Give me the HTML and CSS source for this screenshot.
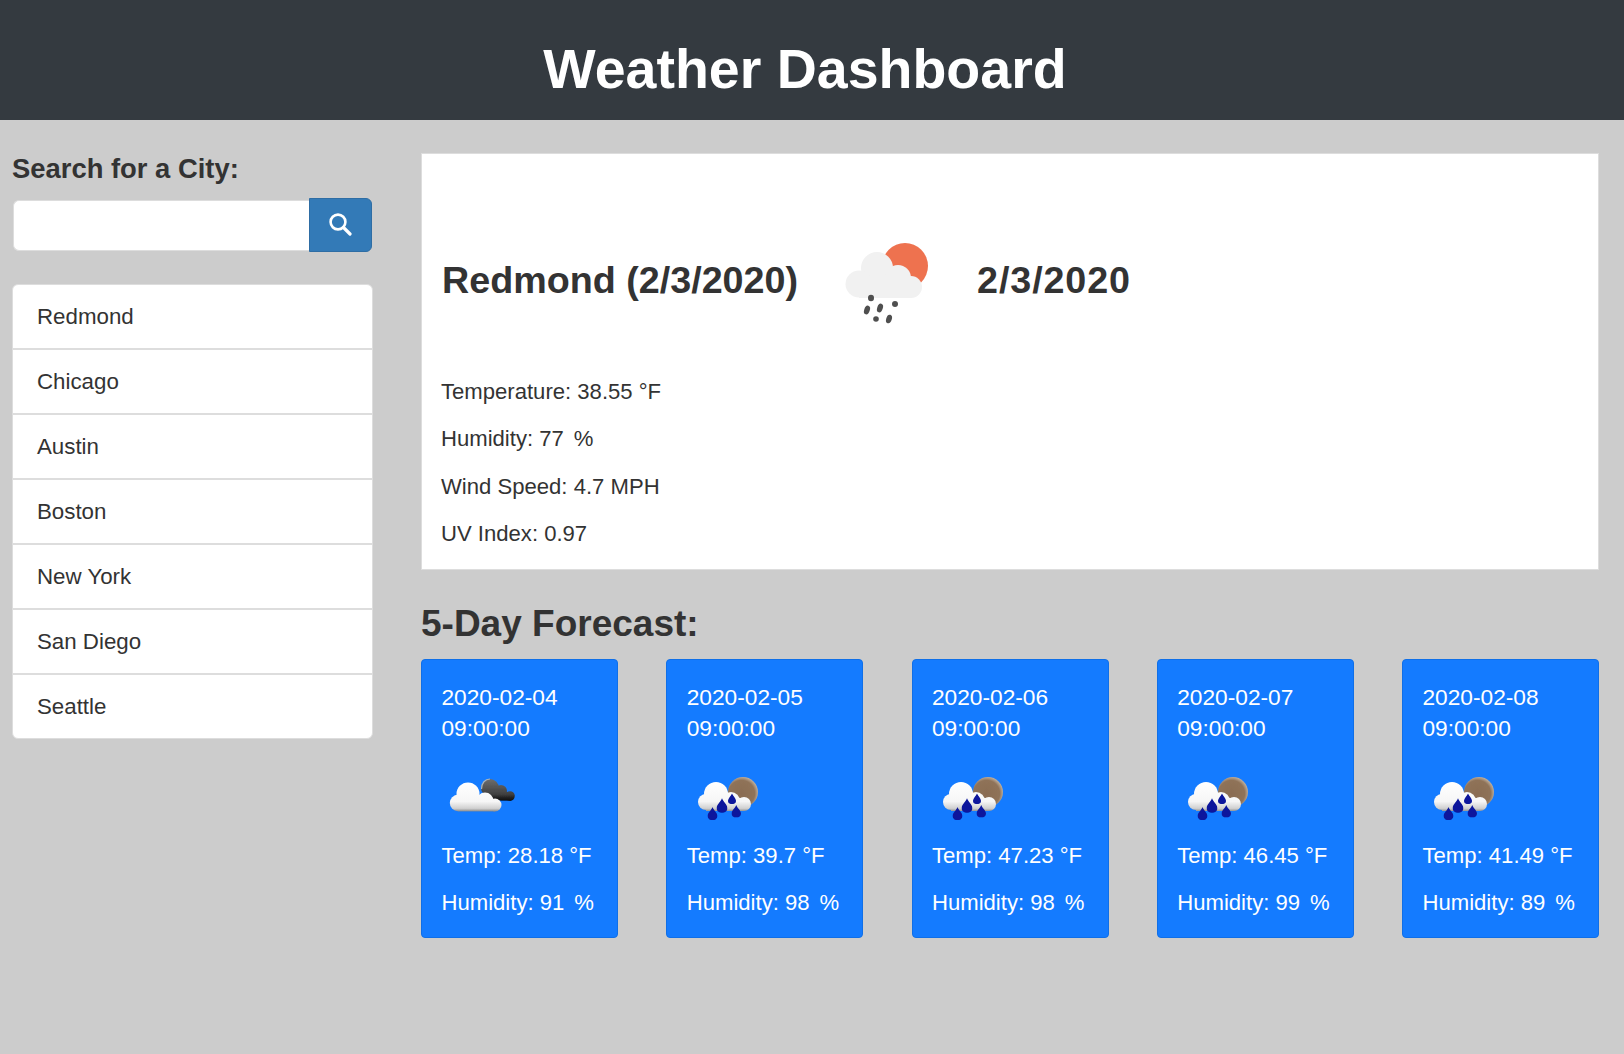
FILE: index.html
```html
<!DOCTYPE html>
<html>
    <head>
        <meta charset="utf-8">
        <title>Weather Dashboard</title>
        <link rel="stylesheet" href="styles.css">
    </head>
    <body>
        <svg class="defs" width="0" height="0">
            <defs>
                <linearGradient id="cloudWhite" gradientUnits="userSpaceOnUse" x1="0" y1="22" x2="0" y2="52">
                    <stop offset="0" stop-color="#ffffff"/>
                    <stop offset="0.65" stop-color="#f6f6f6"/>
                    <stop offset="0.88" stop-color="#d0d0d0"/>
                    <stop offset="1" stop-color="#7d7d7d"/>
                </linearGradient>
                <linearGradient id="cloudDark" gradientUnits="userSpaceOnUse" x1="0" y1="19" x2="0" y2="41">
                    <stop offset="0" stop-color="#6e6e6e"/>
                    <stop offset="0.7" stop-color="#3f3f3f"/>
                    <stop offset="1" stop-color="#050505"/>
                </linearGradient>
                <radialGradient id="sunBrown" cx="0.45" cy="0.55" r="0.55">
                    <stop offset="0" stop-color="#8a6c52"/>
                    <stop offset="0.8" stop-color="#8f7359"/>
                    <stop offset="1" stop-color="#bbaa98"/>
                </radialGradient>
                <filter id="soft"><feGaussianBlur stdDeviation="0.6"/></filter>
                <symbol id="drop" viewBox="0 0 10 13">
                    <path d="M5 0 C6 3 10 6 10 9 A5 4.2 0 0 1 0 9 C0 6 4 3 5 0 Z" fill="#0a169c"/>
                </symbol>
                <symbol id="rainCloud" viewBox="6 0 78 64">
                    <g filter="url(#soft)">
                        <circle cx="62" cy="32" r="15" fill="url(#sunBrown)"/>
                        <g fill="url(#cloudWhite)">
                            <circle cx="35" cy="34" r="12"/>
                            <circle cx="25" cy="42" r="8"/>
                            <circle cx="50" cy="41" r="9"/>
                            <circle cx="63" cy="44" r="7"/>
                            <rect x="25" y="38" width="38" height="13"/>
                        </g>
                        <use href="#drop" x="26.5" y="47" width="10" height="13"/>
                        <use href="#drop" x="35.5" y="37.5" width="11" height="16"/>
                        <use href="#drop" x="47" y="33.5" width="8" height="10.5"/>
                        <use href="#drop" x="50.5" y="45" width="9.5" height="12.5"/>
                    </g>
                </symbol>
                <symbol id="fewClouds" viewBox="7 0 78 64">
                    <g filter="url(#soft)">
                        <g fill="url(#cloudDark)">
                            <circle cx="55" cy="28" r="9"/>
                            <circle cx="66" cy="31" r="6"/>
                            <circle cx="75" cy="36" r="4.8"/>
                            <rect x="52" y="32" width="24" height="8.6"/>
                        </g>
                        <path d="M46.5 29 C46.5 23 50 19 55 19" fill="none" stroke="#a8b4bd" stroke-width="1.2"/>
                        <g fill="url(#cloudWhite)">
                            <circle cx="33" cy="34" r="11.5"/>
                            <circle cx="23" cy="43" r="8.2"/>
                            <circle cx="50" cy="41" r="8.5"/>
                            <circle cx="60" cy="45" r="6.5"/>
                            <rect x="23" y="40" width="37" height="11.4"/>
                        </g>
                    </g>
                </symbol>
            </defs>
        </svg>

        <header class="top-bar">
            <h1>Weather Dashboard</h1>
        </header>

        <div class="page">
            <aside class="sidebar">
                <h3 class="search-title">Search for a City:</h3>
                <div class="search-box">
                    <input type="text" class="search-input">
                    <button class="search-btn">
                        <svg width="24" height="24" viewBox="0 0 24 24">
                            <circle cx="10" cy="10" r="7.4" fill="none" stroke="#fff" stroke-width="2.6"/>
                            <path d="M15.5 15.5 L22 22" stroke="#fff" stroke-width="3.2" stroke-linecap="round"/>
                        </svg>
                    </button>
                </div>
                <ul class="city-list">
                    <li>Redmond</li>
                    <li>Chicago</li>
                    <li>Austin</li>
                    <li>Boston</li>
                    <li>New York</li>
                    <li>San Diego</li>
                    <li>Seattle</li>
                </ul>
            </aside>

            <main class="content">
                <section class="today">
                    <div class="today-head">
                        <h2>Redmond (2/3/2020)</h2>
                        <svg class="today-icon" width="110" height="110" viewBox="0 0 110 110">
                            <g filter="url(#soft)">
                                <circle cx="85" cy="41" r="23" fill="#ee7250"/>
                                <g fill="#f1f1f1">
                                    <circle cx="57" cy="43" r="16"/>
                                    <circle cx="39" cy="59" r="13.5"/>
                                    <circle cx="78" cy="53" r="13"/>
                                    <circle cx="91" cy="62" r="11"/>
                                    <rect x="39" y="55" width="52" height="18"/>
                                </g>
                                <g fill="#4f4f4f">
                                    <ellipse cx="51" cy="73" rx="3" ry="3.2"/>
                                    <ellipse cx="47" cy="85" rx="2.8" ry="4.6" transform="rotate(18 47 85)"/>
                                    <ellipse cx="60" cy="83" rx="2.8" ry="4.6" transform="rotate(18 60 83)"/>
                                    <ellipse cx="75" cy="79" rx="3" ry="3"/>
                                    <ellipse cx="56" cy="94" rx="2.8" ry="2.8"/>
                                    <ellipse cx="69" cy="94" rx="2.8" ry="4.4" transform="rotate(18 69 94)"/>
                                </g>
                            </g>
                        </svg>
                        <h2 class="today-date">2/3/2020</h2>
                    </div>
                    <p>Temperature: 38.55 °F</p>
                    <p>Humidity: 77<span class="pct">%</span></p>
                    <p>Wind Speed: 4.7 MPH</p>
                    <p>UV Index: 0.97</p>
                </section>

                <h3 class="forecast-title">5-Day Forecast:</h3>
                <div class="forecast">
                    <div class="day">
                        <div class="day-date">2020-02-04 09:00:00</div>
                        <svg class="day-icon"><use href="#fewClouds"/></svg>
                        <p>Temp: 28.18 °F</p>
                        <p>Humidity: 91<span class="pct">%</span></p>
                    </div>
                    <div class="day">
                        <div class="day-date">2020-02-05 09:00:00</div>
                        <svg class="day-icon"><use href="#rainCloud"/></svg>
                        <p>Temp: 39.7 °F</p>
                        <p>Humidity: 98<span class="pct">%</span></p>
                    </div>
                    <div class="day">
                        <div class="day-date">2020-02-06 09:00:00</div>
                        <svg class="day-icon"><use href="#rainCloud"/></svg>
                        <p>Temp: 47.23 °F</p>
                        <p>Humidity: 98<span class="pct">%</span></p>
                    </div>
                    <div class="day">
                        <div class="day-date">2020-02-07 09:00:00</div>
                        <svg class="day-icon"><use href="#rainCloud"/></svg>
                        <p>Temp: 46.45 °F</p>
                        <p>Humidity: 99<span class="pct">%</span></p>
                    </div>
                    <div class="day">
                        <div class="day-date">2020-02-08 09:00:00</div>
                        <svg class="day-icon"><use href="#rainCloud"/></svg>
                        <p>Temp: 41.49 °F</p>
                        <p>Humidity: 89<span class="pct">%</span></p>
                    </div>
                </div>
            </main>
        </div>
    </body>
</html>
```

FILE: styles.css
```css
* {
    box-sizing: border-box;
}
html, body {
    height: 100%;
}
body {
    margin: 0;
    background-color: #cccccc;
    color: #333333;
    font-family: "Liberation Sans", Arial, sans-serif;
    font-size: 22.1px;
    line-height: 31px;
    overflow: hidden;
}
h1, h2, h3, p, ul {
    margin: 0;
}
.defs {
    position: absolute;
}

.top-bar {
    height: 120px;
    background-color: #343a40;
    color: white;
    text-align: center;
}
.top-bar h1 {
    font-size: 55.5px;
    line-height: 60px;
    padding: 39px 14px 0 0;
}

.page {
    display: flex;
    padding: 33px 25px 0 12px;
}
.sidebar {
    width: 361px;
    margin-right: 48px;
    flex-shrink: 0;
}
.search-title {
    font-size: 27.4px;
    line-height: 31px;
    margin: 0 0 14px;
}
.search-box {
    display: flex;
    align-items: center;
    height: 54px;
    margin: 0 1px;
}
.search-input {
    flex: 1;
    min-width: 0;
    height: 51px;
    border: 1px solid #dddddd;
    border-right: none;
    border-radius: 6px 0 0 6px;
    background: white;
}
.search-btn {
    width: 63px;
    height: 54px;
    padding: 0 2px 3px 0;
    background-color: #337ab7;
    border: 1px solid #2e6da4;
    border-radius: 0 6px 6px 0;
    display: flex;
    align-items: center;
    justify-content: center;
}
.city-list {
    list-style: none;
    padding: 0;
    margin-top: 32px;
    background: white;
    border: 1px solid #dddddd;
    border-radius: 6px;
    font-size: 22.3px;
}
.city-list li {
    height: 65px;
    padding: 16px 24px;
    border-bottom: 2px solid #dddddd;
}
.city-list li:last-child {
    border-bottom: none;
    height: 63px;
}

.content {
    flex: 1;
    min-width: 0;
}
.today {
    height: 417px;
    background: white;
    border: 1px solid #dddddd;
    padding: 71px 19px 0;
}
.today-head {
    display: flex;
    align-items: center;
    height: 110px;
    margin-bottom: 41px;
    padding-left: 1px;
}
.today-head h2 {
    font-size: 37.7px;
    line-height: 40px;
}
.today-head .today-date {
    letter-spacing: 0.9px;
}
.today-icon {
    margin: 0 47px 0 22px;
}
.today p {
    margin-bottom: 16.3px;
}
.pct {
    margin-left: 10px;
}
.forecast-title {
    font-size: 37px;
    line-height: 40px;
    margin: 34px 0 15px;
}
.forecast {
    display: flex;
    justify-content: space-between;
}
.day {
    width: 197px;
    height: 279px;
    background-color: #147bff;
    border: 1px solid #0f6fe8;
    border-radius: 4px;
    color: white;
    padding: 22px 19.5px 0;
}
.day-date {
    width: 130px;
    font-size: 22.7px;
}
.day-icon {
    display: block;
    width: 78px;
    height: 64px;
    margin: 16px 0 16px;
}
.day p {
    margin-bottom: 16.3px;
}
```
